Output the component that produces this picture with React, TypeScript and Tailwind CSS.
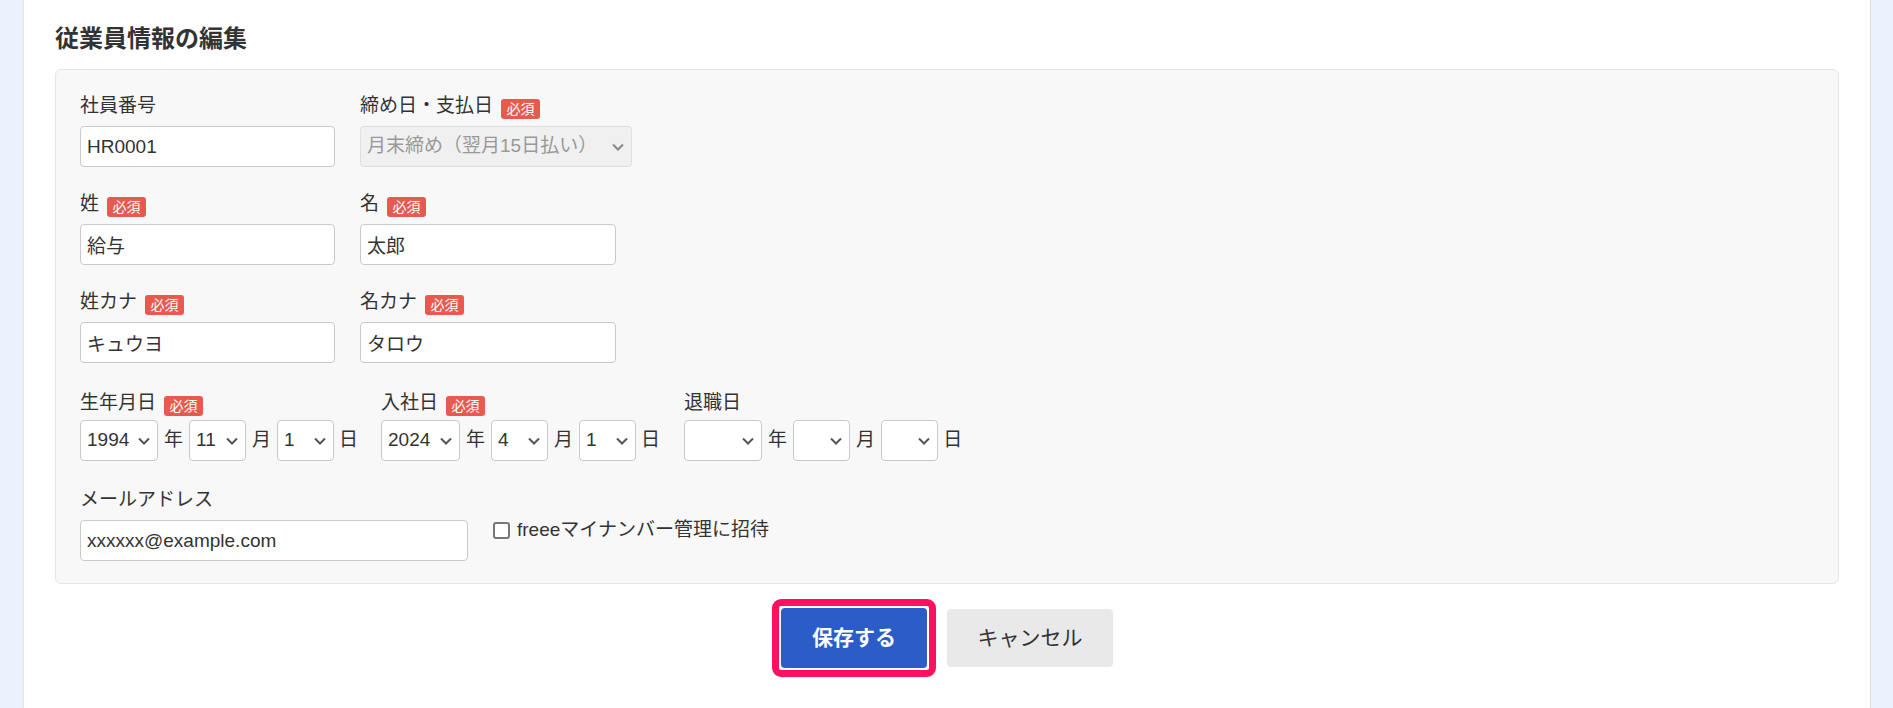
import { ChangeEvent, useState } from "react";

const FONT = { fontFamily: '"Liberation Sans", "Noto Sans CJK JP", sans-serif' };

const Required = () => (
  <span className="ml-[8px] inline-flex h-[20px] w-[39px] items-center justify-center rounded-[3px] bg-[#e85a50] text-[14px] leading-none text-white translate-y-[3px]">
    必須
  </span>
);

const Label = ({ text, required }: { text: string; required?: boolean }) => (
  <div className="flex h-[24px] items-center text-[19px] leading-[24px] text-[#333]">
    <span>{text}</span>
    {required && <Required />}
  </div>
);

const TextInput = ({ value, width }: { value: string; width: string }) => {
  const [v, setV] = useState(value);
  return (
    <input
      value={v}
      onChange={(e: ChangeEvent<HTMLInputElement>) => setV(e.target.value)}
      className={`${width} h-[41px] rounded-[4px] border border-[#c9c9c9] bg-white px-[6px] text-[19px] text-[#333] outline-none`}
      style={FONT}
    />
  );
};

const Chevron = ({ light }: { light?: boolean }) => (
  <svg
    viewBox="0 0 12 8"
    className="pointer-events-none absolute right-[8px] top-1/2 h-[8px] w-[12px] -translate-y-1/2"
    fill="none"
    stroke={light ? "#888" : "#555"}
    strokeWidth="2"
  >
    <path d="M1 1.5l5 5 5-5" />
  </svg>
);

const Select = ({ value, width, options }: { value: string; width: string; options: string[] }) => (
  <div className={`relative ${width}`}>
    <select
      defaultValue={value}
      className="h-[41px] w-full appearance-none rounded-[4px] border border-[#c9c9c9] bg-white pl-[6px] text-[19px] text-[#333] outline-none"
      style={FONT}
    >
      {options.map((o) => (
        <option key={o} value={o}>
          {o}
        </option>
      ))}
    </select>
    <Chevron />
  </div>
);

const years = ["", ...Array.from({ length: 60 }, (_, i) => String(1970 + i))];
const months = ["", ...Array.from({ length: 12 }, (_, i) => String(i + 1))];
const days = ["", ...Array.from({ length: 31 }, (_, i) => String(i + 1))];

const DateGroup = ({
  label,
  required,
  y,
  m,
  d,
  yearWidth,
  className,
}: {
  label: string;
  required?: boolean;
  y: string;
  m: string;
  d: string;
  yearWidth: string;
  className?: string;
}) => (
  <div className={className}>
    <div className="translate-y-[3px]">
      <Label text={label} required={required} />
    </div>
    <div className="mt-[8px] flex items-center text-[19px] text-[#333]">
      <Select value={y} width={yearWidth} options={years} />
      <span className="mx-[6px]">年</span>
      <Select value={m} width="w-[57px]" options={months} />
      <span className="mx-[6px]">月</span>
      <Select value={d} width="w-[57px]" options={days} />
      <span className="ml-[5px]">日</span>
    </div>
  </div>
);

export default function App() {
  const [invite, setInvite] = useState(false);

  return (
    <div className="flex min-h-screen w-full bg-white" style={FONT}>
      <div className="w-[24px] shrink-0 border-r border-[#dfe6ef] bg-[#ebf2fd]" />

      <main className="flex-1 px-[31px] pt-[23px]">
        <h2 className="text-[24px] font-bold leading-[32px] text-[#333]">従業員情報の編集</h2>

        <section className="mt-[14px] rounded-[6px] border border-[#e6e6e6] bg-[#f8f8f8] px-[24px] pb-[22px] pt-[24px]">
          {/* 社員番号 / 締め日 */}
          <div className="flex gap-[25px]">
            <div>
              <Label text="社員番号" />
              <div className="mt-[8px]">
                <TextInput value="HR0001" width="w-[255px]" />
              </div>
            </div>
            <div>
              <Label text="締め日・支払日" required />
              <div className="relative mt-[8px] w-[272px]">
                <select
                  disabled
                  defaultValue="end"
                  className="h-[41px] w-full appearance-none rounded-[4px] border border-[#dedede] bg-[#f0f0f0] pl-[6px] text-[19px] text-[#999] outline-none"
                  style={FONT}
                >
                  <option value="end">月末締め（翌月15日払い）</option>
                </select>
                <Chevron light />
              </div>
            </div>
          </div>

          {/* 姓 / 名 */}
          <div className="mt-[25px] flex gap-[25px]">
            <div>
              <Label text="姓" required />
              <div className="mt-[8px]">
                <TextInput value="給与" width="w-[255px]" />
              </div>
            </div>
            <div>
              <Label text="名" required />
              <div className="mt-[8px]">
                <TextInput value="太郎" width="w-[256px]" />
              </div>
            </div>
          </div>

          {/* カナ */}
          <div className="mt-[25px] flex gap-[25px]">
            <div>
              <Label text="姓カナ" required />
              <div className="mt-[8px]">
                <TextInput value="キュウヨ" width="w-[255px]" />
              </div>
            </div>
            <div>
              <Label text="名カナ" required />
              <div className="mt-[8px]">
                <TextInput value="タロウ" width="w-[256px]" />
              </div>
            </div>
          </div>

          {/* 日付 */}
          <div className="mt-[25px] flex">
            <DateGroup label="生年月日" required y="1994" m="11" d="1" yearWidth="w-[78px]" className="mr-[23px]" />
            <DateGroup label="入社日" required y="2024" m="4" d="1" yearWidth="w-[79px]" className="mr-[24px]" />
            <DateGroup label="退職日" y="" m="" d="" yearWidth="w-[78px]" />
          </div>

          {/* メール */}
          <div className="mt-[27px] flex gap-[25px]">
            <div>
              <Label text="メールアドレス" />
              <div className="mt-[8px]">
                <TextInput value="xxxxxx@example.com" width="w-[388px]" />
              </div>
            </div>
            <label className="flex h-fit cursor-pointer items-center pt-[30px] text-[19px] leading-[24px] text-[#333]">
              <input
                type="checkbox"
                checked={invite}
                onChange={() => setInvite(!invite)}
                className="mr-[7px] h-[17px] w-[17px] appearance-none rounded-[3px] border-2 border-[#777] bg-white checked:bg-[#2b5cc8]"
              />
              freeeマイナンバー管理に招待
            </label>
          </div>
        </section>

        <div className="mt-[24px] flex justify-center gap-[20px]">
          <div className="relative">
            <div className="pointer-events-none absolute -inset-[9px] rounded-[9px] border-[7px] border-[#ff1060]" />
            <button className="h-[60px] w-[146px] rounded-[4px] bg-[#2b5cc8] text-[21px] font-bold text-white">
              保存する
            </button>
          </div>
          <button className="mt-[1px] h-[58px] w-[166px] rounded-[4px] bg-[#e9e9e9] text-[21px] text-[#333]">
            キャンセル
          </button>
        </div>
      </main>

      <div className="w-[23px] shrink-0 border-l border-[#dcdcdc] bg-[#ebf2fd]" />
    </div>
  );
}
